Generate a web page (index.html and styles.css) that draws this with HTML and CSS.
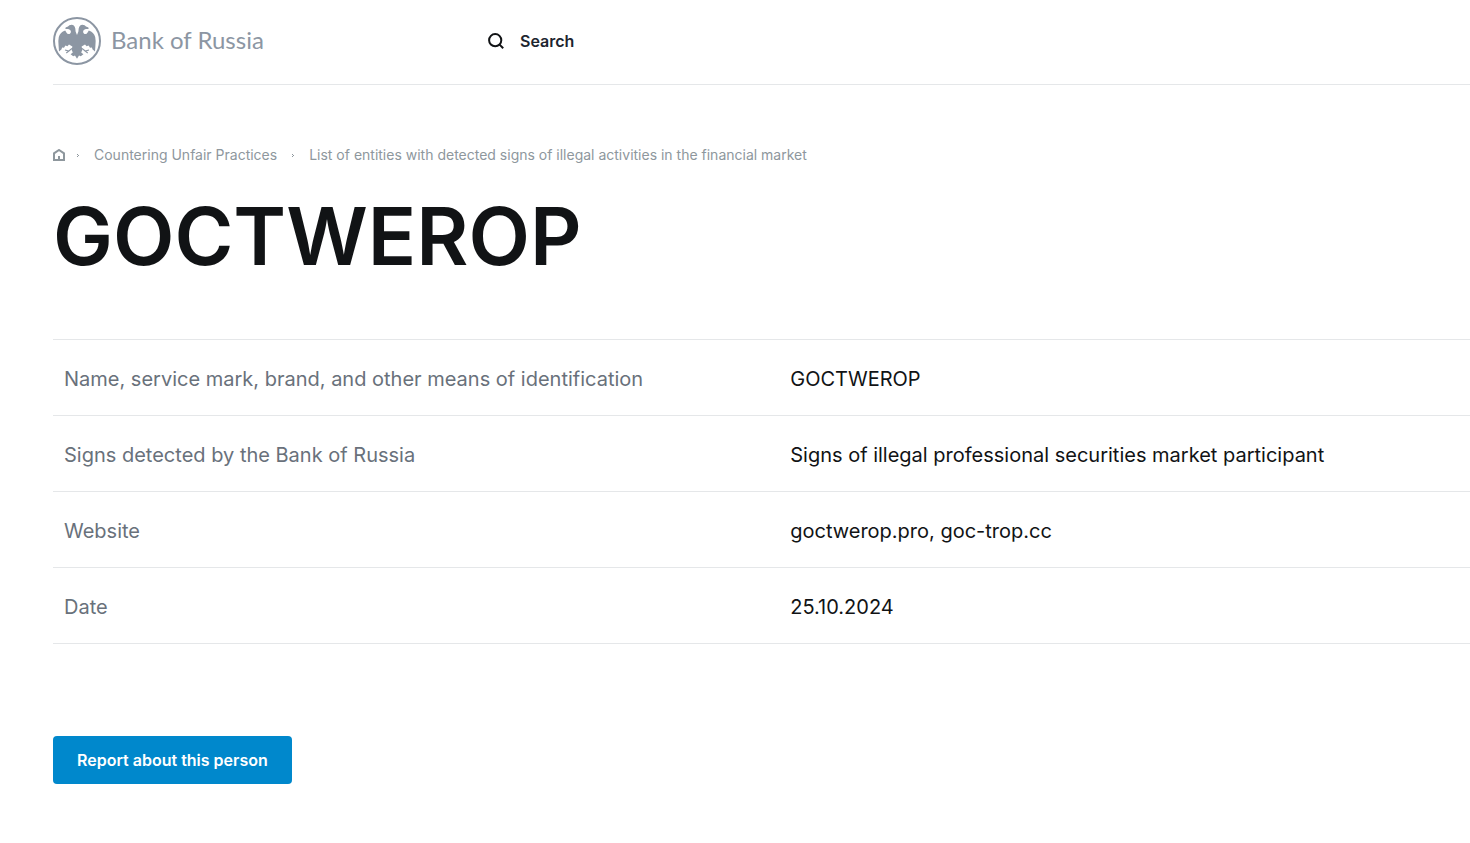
FILE: index.html
```html
<!DOCTYPE html>
<html lang="en">
<head>
<meta charset="utf-8">
<meta name="viewport" content="width=device-width, initial-scale=1">
<title>GOCTWEROP | Bank of Russia</title>
<link rel="stylesheet" href="styles.css">
</head>
<body>
<div class="page">
  <header class="header">
    <a class="brand" href="#">
      <svg class="emblem" viewBox="0 0 48 48" aria-hidden="true">
        <circle cx="24" cy="24" r="23" fill="none" stroke="currentColor" stroke-width="2"/>
        <path fill="currentColor" d="M24 18 L22.6 14.5 L22.3 11.5 Q21.6 8 18.6 7.8 Q16 7.8 15 9.6 L12.6 10.4 L12.4 12 L15.2 12 Q18 12.6 18 15 L17 16.8 Q14.6 17.8 13.4 15.6 L12.2 13.4 Q7.2 15 5.8 20 Q4.9 24 5.6 29 L6 34.6 L8.6 32.2 L9 30.6 L11 30.8 L12.4 28.4 L14.4 29.2 L16 27.6 L19.4 29.4 L18.6 32.8 L19.8 35.6 L17.6 37.3 L20.2 39.2 L22 38.5 L24 41.8 L26 38.5 L27.8 39.2 L30.4 37.3 L28.2 35.6 L29.4 32.8 L28.6 29.4 L32 27.6 L33.6 29.2 L35.6 28.4 L37 30.8 L39 30.6 L39.4 32.2 L42 34.6 L42.4 29 Q43.1 24 42.2 20 Q40.8 15 35.8 13.4 L34.6 15.6 Q33.4 17.8 31 16.8 L30 15 Q30 12.6 32.8 12 L35.6 12 L35.4 10.4 L33 9.6 Q32 7.8 29.4 7.8 Q26.4 8 25.7 11.5 L25.4 14.5Z"/>
        <path fill="none" stroke="currentColor" stroke-width="1.2" d="M19 31.4 L15.8 34 L12 33 M15.8 34 L13.3 36 M29 31.4 L32.2 34 L36 33 M32.2 34 L34.7 36"/>
      </svg>
      <span class="brand-name">Bank of Russia</span>
    </a>
    <button class="search" type="button">
      <svg class="search-icon" viewBox="0 0 16 16" aria-hidden="true"><circle cx="7.2" cy="7.2" r="6.1" fill="none" stroke="currentColor" stroke-width="2"/><path d="M11.6 11.6 L15.2 15.2" stroke="currentColor" stroke-width="2"/></svg>
      <span>Search</span>
    </button>
  </header>
  <main>
    <nav class="breadcrumbs" aria-label="Breadcrumb">
      <a class="home" href="#" aria-label="Home"><svg class="home-icon" viewBox="0 0 12 12" aria-hidden="true"><path d="M1 11V4.4L6 1l5 3.4V11Z" fill="none" stroke="currentColor" stroke-width="2"/><path d="M5 7h2v4H5Z" fill="currentColor"/></svg></a>
      <svg class="chevron" viewBox="0 0 2 3" aria-hidden="true"><path d="M0 0h1v1H0ZM1 1h1v1H1ZM0 2h1v1H0Z" fill="currentColor"/></svg>
      <a class="crumb" href="#">Countering Unfair Practices</a>
      <svg class="chevron" viewBox="0 0 2 3" aria-hidden="true"><path d="M0 0h1v1H0ZM1 1h1v1H1ZM0 2h1v1H0Z" fill="currentColor"/></svg>
      <a class="crumb" href="#">List of entities with detected signs of illegal activities in the financial market</a>
    </nav>
    <h1 class="title">GOCTWEROP</h1>
    <table class="details">
      <tbody>
        <tr><th scope="row">Name, service mark, brand, and other means of identification</th><td>GOCTWEROP</td></tr>
        <tr><th scope="row">Signs detected by the Bank of Russia</th><td>Signs of illegal professional securities market participant</td></tr>
        <tr><th scope="row">Website</th><td>goctwerop.pro, goc-trop.cc</td></tr>
        <tr><th scope="row">Date</th><td>25.10.2024</td></tr>
      </tbody>
    </table>
    <button class="report" type="button">Report about this person</button>
  </main>
</div>
</body>
</html>
```
FILE: styles.css
```css
* { box-sizing: border-box; }
body { margin: 0; background: #fff; color: #111315; font-family: Inter, "Liberation Sans", sans-serif; }
a { color: inherit; text-decoration: none; }
button { border: 0; font: inherit; cursor: pointer; }
.page { padding: 0 0 56px 53px; }
.header { display: flex; align-items: center; height: 85px; padding-bottom: 2px; border-bottom: 1px solid #e5e7e9; }
.brand { display: flex; flex: 0 0 435px; align-items: center; gap: 10px; color: #8c96a3; }
.emblem { width: 48px; height: 48px; }
.brand-name { padding-bottom: 2px; font-family: Lato, sans-serif; font-size: 24px; line-height: 32px; }
.search { display: flex; align-items: center; gap: 16px; padding: 0; background: none; color: #1d252f; font-size: 16px; font-weight: 600; line-height: 24px; }
.search-icon { width: 16px; height: 16px; color: #111315; }
.breadcrumbs { display: flex; align-items: center; gap: 15px; margin-top: 60px; color: #8e979d; font-size: 14px; line-height: 20px; }
.home { display: flex; margin-right: -3px; }
.home-icon { width: 12px; height: 12px; }
.chevron { width: 2px; height: 3px; }
.title { margin: 21px 0 0; font-size: 80px; font-weight: 600; line-height: 100px; }
.details { width: 100%; margin-top: 53px; border-collapse: collapse; border-top: 1px solid #e5e7e9; font-size: 20px; line-height: 28px; }
.details tr { border-bottom: 1px solid #e5e7e9; }
.details th, .details td { padding: 25px 11px 22px; text-align: left; font-weight: 400; }
.details th { width: 51.25%; color: #69717b; }
.report { margin-top: 92px; padding: 12px 24px; border-radius: 4px; background: #0088cc; color: #fff; font-size: 16px; font-weight: 600; line-height: 24px; }
```
